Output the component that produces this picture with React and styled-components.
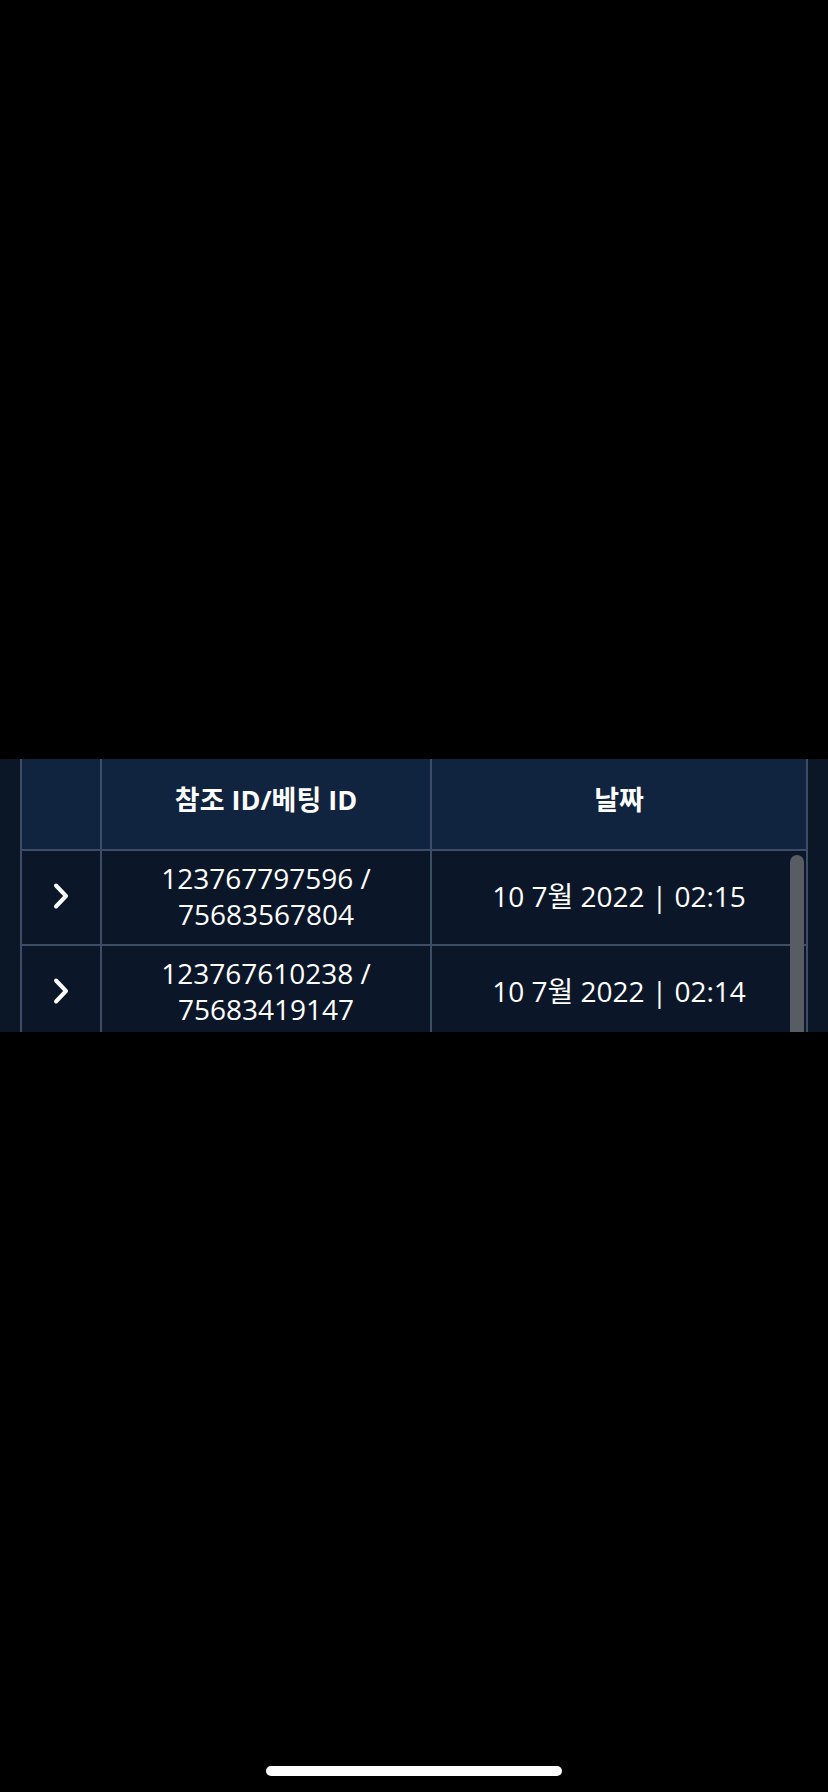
import React from "react";
import styled, { createGlobalStyle } from "styled-components";

const Global = createGlobalStyle`
  html, body { margin: 0; padding: 0; background: #000; }
  body { font-family: "Open Sans", "Noto Sans CJK KR", sans-serif; }
`;

const Screen = styled.div`
  width: 828px;
  height: 1792px;
  background: #000;
  display: flex;
  flex-direction: column;
  align-items: stretch;
  padding-top: 759px;
  box-sizing: border-box;
  position: relative;
`;

const Panel = styled.div`
  height: 273px;
  overflow: hidden;
  background: #0b1627;
  padding: 0 20px;
`;

const Table = styled.div`
  border-left: 2px solid #3d4d65;
  display: flex;
  flex-direction: column;
`;

const COLS = "80px 330px 376px";

const Row = styled.div`
  display: grid;
  grid-template-columns: ${COLS};
  background: ${(p) => (p.$head ? "#10233f" : "#0b1729")};
  border-bottom: 2px solid #3d4d65;
  height: ${(p) => p.$h}px;
`;

const Cell = styled.div`
  border-right: 2px solid #3d4d65;
  display: flex;
  align-items: center;
  justify-content: center;
  text-align: center;
  color: #ffffff;
  font-family: "Open Sans", "Noto Sans CJK KR", sans-serif;
  font-size: ${(p) => (p.$head ? "27px" : "28px")};
  font-weight: ${(p) => (p.$head ? 700 : 400)};
  line-height: 36px;
  padding-bottom: ${(p) => (p.$head ? "8px" : "3px")};
  box-sizing: border-box;
`;

const Body = styled.div`
  position: relative;
`;

const ScrollThumb = styled.div`
  position: absolute;
  top: 4px;
  right: 4px;
  width: 14px;
  height: 260px;
  border-radius: 7px;
  background: #585c63;
`;

const HomeBar = styled.div`
  position: absolute;
  left: 266px;
  top: 1766px;
  width: 296px;
  height: 10px;
  border-radius: 5px;
  background: #fff;
`;

const Chevron = () => (
  <svg width="18" height="28" viewBox="0 0 18 28" fill="none">
    <path
      d="M4 3.5 L14 14 L4 24.5"
      stroke="#fff"
      strokeWidth="4"
      strokeLinecap="round"
      strokeLinejoin="round"
    />
  </svg>
);

const rows = [
  { id: "123767797596 /", bet: "75683567804", date: "10 7월 2022 | 02:15" },
  { id: "123767610238 /", bet: "75683419147", date: "10 7월 2022 | 02:14" },
];

export default function App() {
  return (
    <>
      <Global />
      <Screen>
        <Panel>
          <Table>
            <Row $head $h={90}>
              <Cell $head />
              <Cell $head>참조 ID/베팅 ID</Cell>
              <Cell $head>날짜</Cell>
            </Row>
            <Body>
              {rows.map((r) => (
                <Row key={r.id} $h={93}>
                  <Cell>
                    <Chevron />
                  </Cell>
                  <Cell>
                    {r.id}
                    <br />
                    {r.bet}
                  </Cell>
                  <Cell>{r.date}</Cell>
                </Row>
              ))}
              <ScrollThumb />
            </Body>
          </Table>
        </Panel>
        <HomeBar />
      </Screen>
    </>
  );
}
